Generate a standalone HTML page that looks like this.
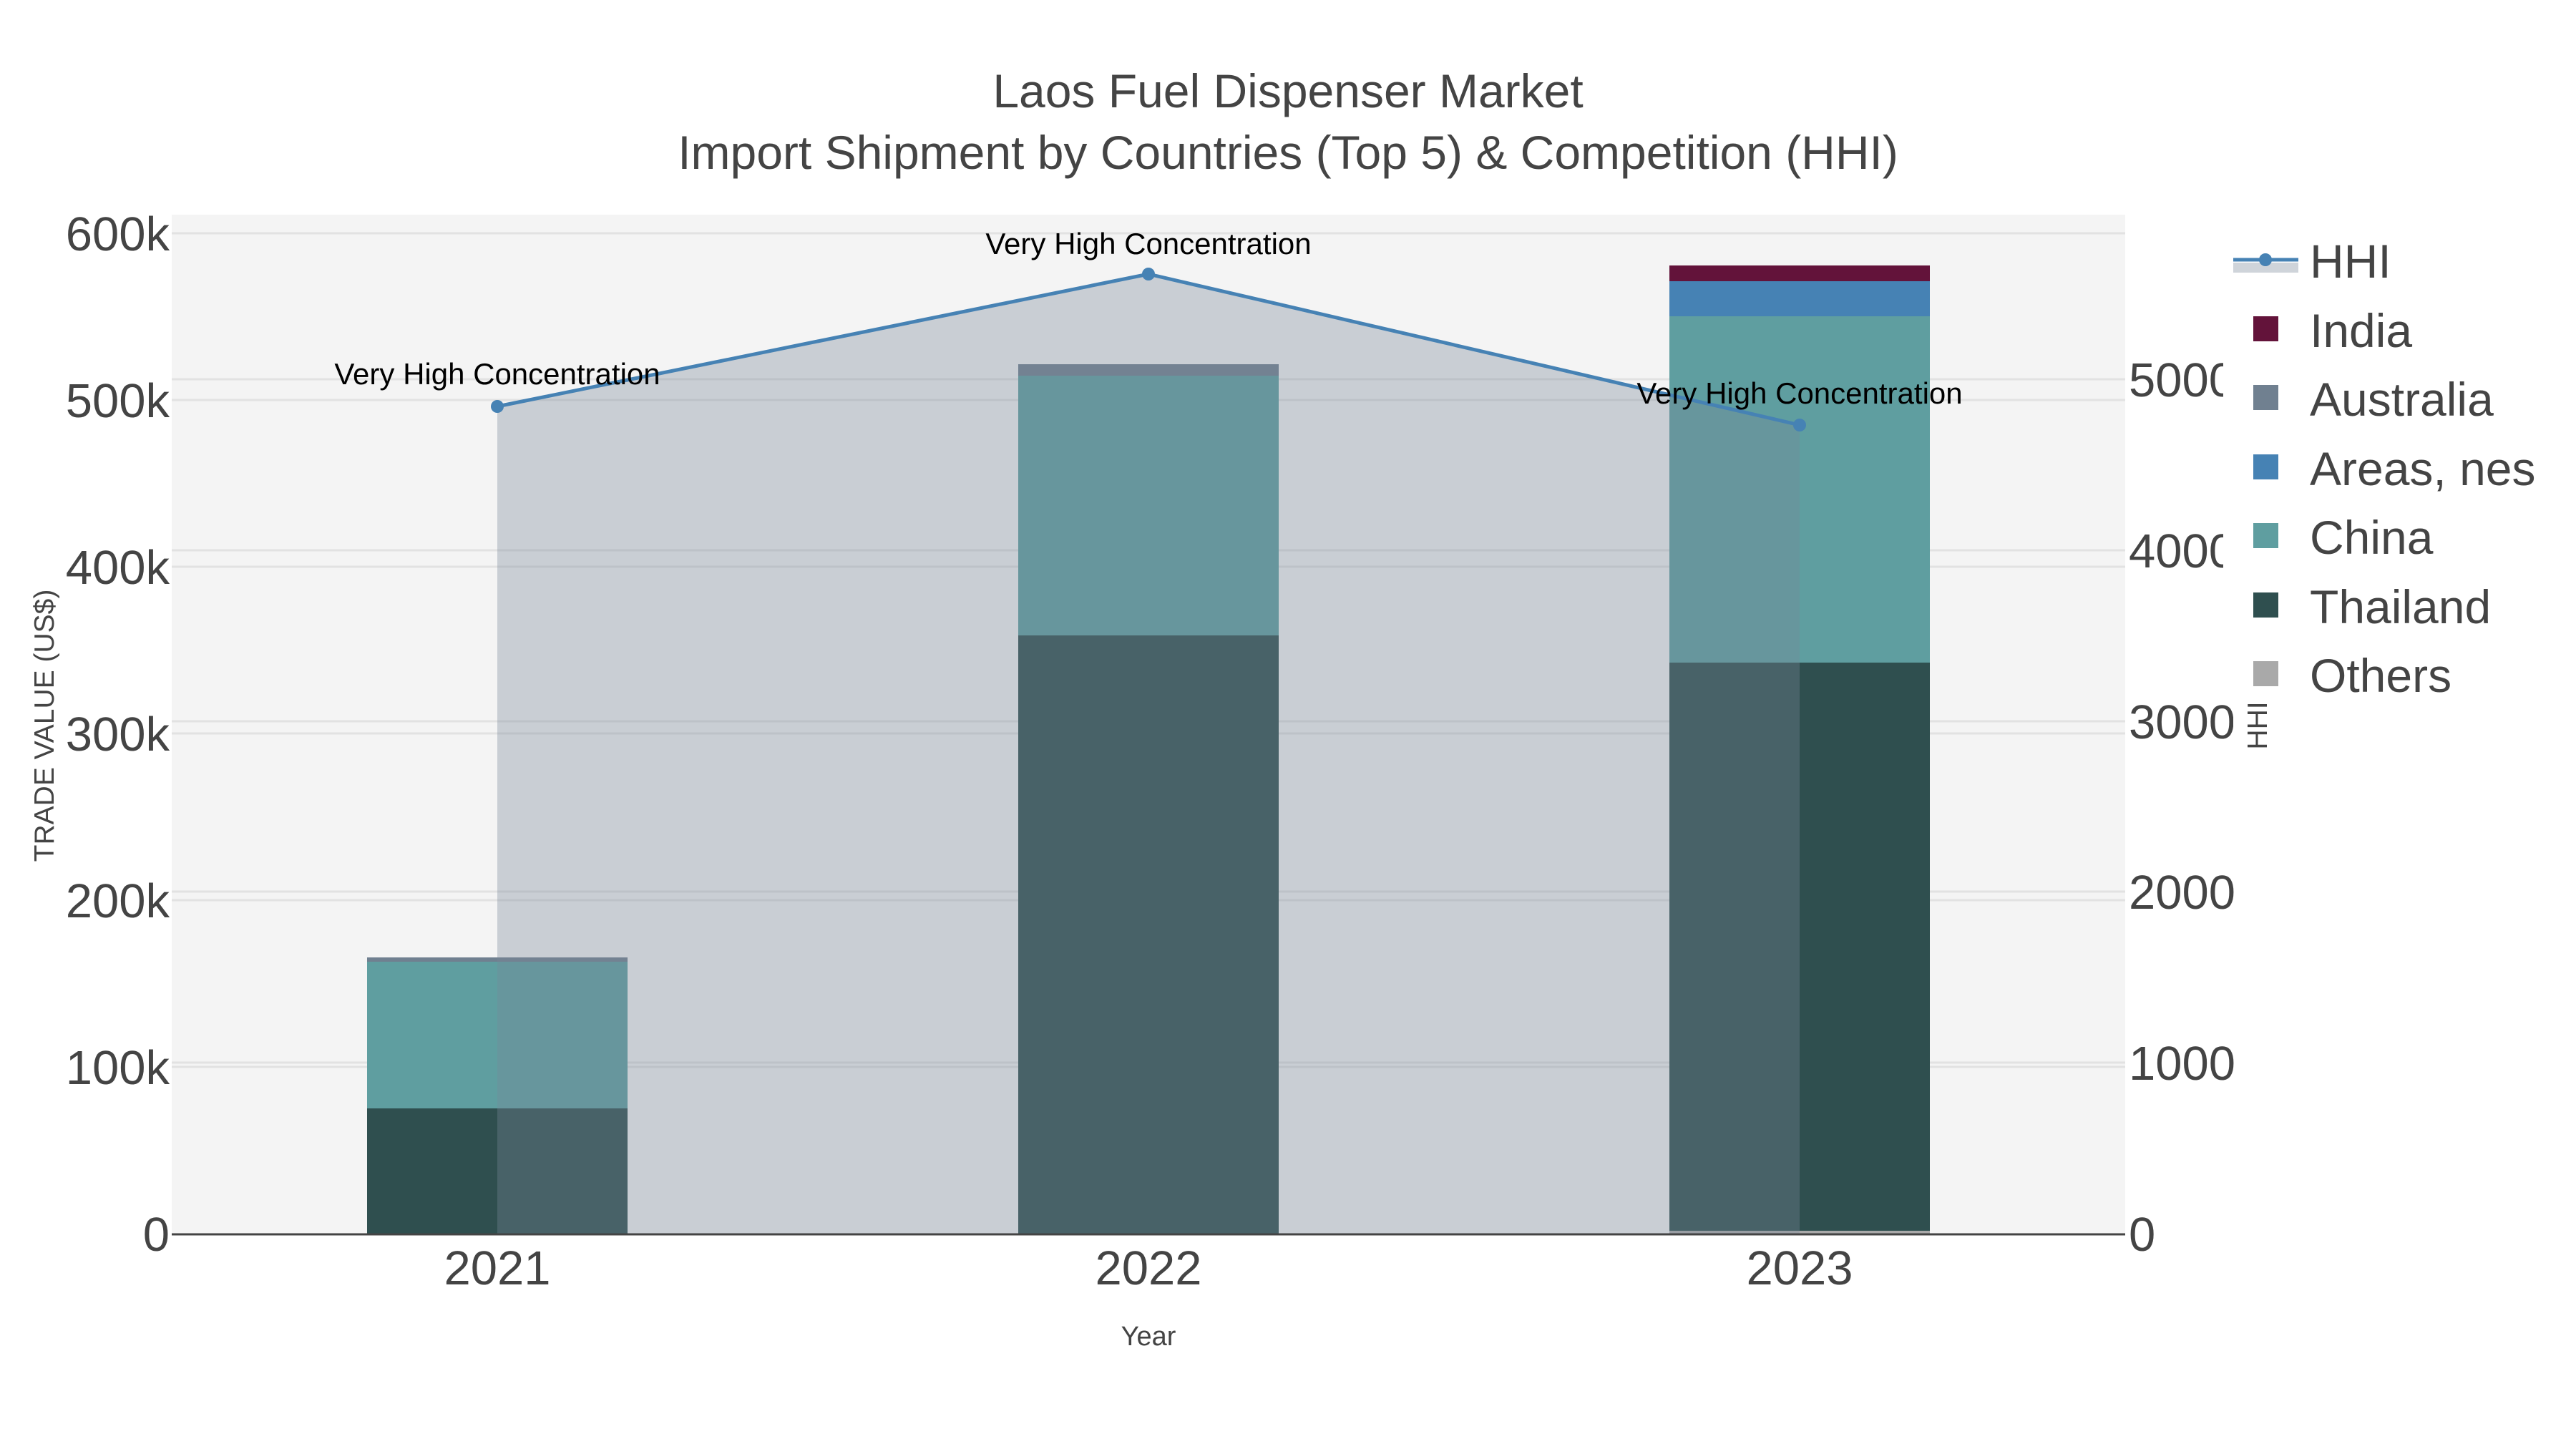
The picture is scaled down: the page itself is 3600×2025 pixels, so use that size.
<!DOCTYPE html>
<html><head><meta charset="utf-8"><style>
html,body{margin:0;padding:0;background:#fff;}
svg{display:block;font-family:"Liberation Sans",Arial,sans-serif;}
</style></head><body>
<svg width="3600" height="2025" viewBox="0 0 3600 2025" xmlns="http://www.w3.org/2000/svg">
<defs>
<clipPath id="pa"><rect x="240" y="300" width="2730" height="1424"/></clipPath>
<clipPath id="c1"><rect x="2960" y="0" width="147" height="2025"/></clipPath>
<clipPath id="c2"><rect x="2960" y="0" width="161" height="2025"/></clipPath>
</defs>
<rect width="3600" height="2025" fill="#fff"/>
<rect x="240" y="300" width="2730" height="1424" fill="#f4f4f4"/>
<g stroke="#e2e2e2" stroke-width="3">
<line x1="240" x2="2970" y1="1491" y2="1491"/><line x1="240" x2="2970" y1="1258" y2="1258"/>
<line x1="240" x2="2970" y1="1025" y2="1025"/><line x1="240" x2="2970" y1="792" y2="792"/>
<line x1="240" x2="2970" y1="559" y2="559"/><line x1="240" x2="2970" y1="326" y2="326"/>
<line x1="240" x2="2970" y1="1485" y2="1485"/><line x1="240" x2="2970" y1="1246" y2="1246"/>
<line x1="240" x2="2970" y1="1008" y2="1008"/><line x1="240" x2="2970" y1="769" y2="769"/>
<line x1="240" x2="2970" y1="530" y2="530"/>
</g>
<g clip-path="url(#pa)">
<rect x="513" y="1549" width="364" height="175" fill="#2f4f4f"/>
<rect x="513" y="1344" width="364" height="205" fill="#5f9ea0"/>
<rect x="513" y="1338" width="364" height="6" fill="#708090"/>
<rect x="1423" y="888" width="364" height="836" fill="#2f4f4f"/>
<rect x="1423" y="525" width="364" height="363" fill="#5f9ea0"/>
<rect x="1423" y="509" width="364" height="16" fill="#708090"/>
<rect x="2333" y="1720" width="364" height="4" fill="#a9a9a9"/>
<rect x="2333" y="926" width="364" height="794" fill="#2f4f4f"/>
<rect x="2333" y="442" width="364" height="484" fill="#5f9ea0"/>
<rect x="2333" y="393" width="364" height="49" fill="#4682b4"/>
<rect x="2333" y="371" width="364" height="22" fill="#63133a"/>
<polygon points="695,568 1605,383 2515,594 2515,1724 695,1724" fill="rgba(119,136,153,0.35)"/>
<polyline points="695,568 1605,383 2515,594" fill="none" stroke="#4682b4" stroke-width="5"/>
<circle cx="695" cy="568" r="9" fill="#4682b4"/>
<circle cx="1605" cy="383" r="9" fill="#4682b4"/>
<circle cx="2515" cy="594" r="9" fill="#4682b4"/>
</g>
<line x1="240" x2="2970" y1="1725" y2="1725" stroke="#444" stroke-width="3"/>
<g font-size="42" fill="#000" text-anchor="middle">
<text x="695" y="537">Very High Concentration</text>
<text x="1605" y="355">Very High Concentration</text>
<text x="2515" y="564">Very High Concentration</text>
</g>
<g fill="#444" font-size="66" text-anchor="middle">
<text x="1800" y="150">Laos Fuel Dispenser Market</text>
<text x="1800" y="236">Import Shipment by Countries (Top 5) &amp; Competition (HHI)</text>
</g>
<g fill="#444" font-size="67" text-anchor="end">
<text x="237" y="1748">0</text><text x="237" y="1515">100k</text><text x="237" y="1282">200k</text>
<text x="237" y="1049">300k</text><text x="237" y="816">400k</text><text x="237" y="583">500k</text>
<text x="237" y="350">600k</text>
</g>
<g fill="#444" font-size="67">
<text x="2975" y="1748">0</text><text x="2975" y="1509">1000</text><text x="2975" y="1270">2000</text>
<text x="2975" y="1032" clip-path="url(#c2)">3000</text>
<text x="2975" y="793" clip-path="url(#c1)">4000</text>
<text x="2975" y="554" clip-path="url(#c1)">5000</text>
</g>
<g fill="#444" font-size="67" text-anchor="middle">
<text x="695" y="1795">2021</text><text x="1605" y="1795">2022</text><text x="2515" y="1795">2023</text>
</g>
<text x="1605" y="1880" fill="#444" font-size="38" text-anchor="middle">Year</text>
<text transform="translate(75,1014) rotate(-90)" fill="#444" font-size="39" text-anchor="middle">TRADE VALUE (US$)</text>
<text transform="translate(3168,1014) rotate(-90)" fill="#444" font-size="39" text-anchor="middle">HHI</text>
<rect x="3121" y="367" width="91" height="14" fill="#cfd4da"/>
<line x1="3121" x2="3212" y1="363" y2="363" stroke="#4682b4" stroke-width="5"/>
<circle cx="3166" cy="363" r="9" fill="#4682b4"/>
<rect x="3149" y="442" width="35" height="35" fill="#63133a"/>
<rect x="3149" y="538" width="35" height="35" fill="#708090"/>
<rect x="3149" y="635" width="35" height="35" fill="#4682b4"/>
<rect x="3149" y="731" width="35" height="35" fill="#5f9ea0"/>
<rect x="3149" y="828" width="35" height="35" fill="#2f4f4f"/>
<rect x="3149" y="924" width="35" height="35" fill="#a9a9a9"/>
<g fill="#444" font-size="66">
<text x="3228" y="388">HHI</text>
<text x="3228" y="485">India</text>
<text x="3228" y="581">Australia</text>
<text x="3228" y="678">Areas, nes</text>
<text x="3228" y="774">China</text>
<text x="3228" y="871">Thailand</text>
<text x="3228" y="967">Others</text>
</g>
</svg>
</body></html>
